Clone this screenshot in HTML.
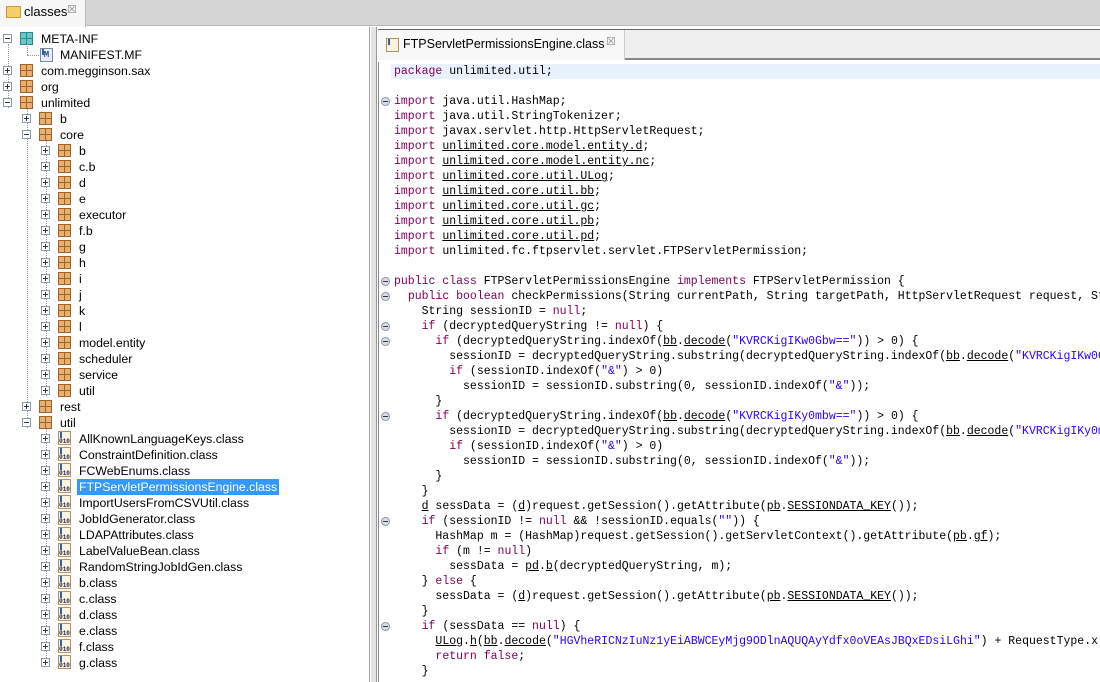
<!DOCTYPE html>
<html><head><meta charset="utf-8"><style>
*{margin:0;padding:0;box-sizing:border-box}
body{width:1100px;height:682px;overflow:hidden;background:#fff;position:relative;font-family:"Liberation Sans",Tahoma,sans-serif;font-size:12px;color:#000}
.abs{position:absolute}
#topbar{left:0;top:0;width:1100px;height:26px;background:#d6d6d6;border-bottom:1px solid #b8b8b8}
#ltab{left:0;top:0;width:86px;height:27px;background:#f7f7f7;border-right:1px solid #bbb}
#left{left:0;top:27px;width:370px;height:655px;background:#fff;border-right:1px solid #a0a0a0}
#sep{left:371px;top:27px;width:6px;height:655px;background:#e4e4e4;border-right:1px solid #999}
#rhead{left:378px;top:29px;width:722px;height:31px;background:#efefef;border-top:1px solid #666;border-bottom:2px solid #888}
#rtab{left:378px;top:30px;width:247px;height:30px;background:#f8f8f8;border-right:1px solid #ccc}
#gutter{left:378px;top:62px;width:13px;height:620px;background:#fff;border-left:1px solid #888}
#tree .row{font-size:12.3px}
.row{position:absolute;height:16px;line-height:16px;white-space:nowrap}
.exp{position:absolute;width:9px;height:9px;border:1px solid #8a9bb0;background:#fff}
.exp:before{content:"";position:absolute;left:1px;top:3px;width:5px;height:1px;background:#333}
.exp.p:after{content:"";position:absolute;left:3px;top:1px;width:1px;height:5px;background:#333}
.pkg{position:absolute;width:13px;height:13px;background:#e8b070;border:1px solid #a0622a}
.pkg:before{content:"";position:absolute;left:5px;top:0;width:1px;height:11px;background:#a0622a}
.pkg:after{content:"";position:absolute;left:0;top:5px;width:11px;height:1px;background:#a0622a}
.pkg.t{background:#6cc8c4;border-color:#2a8a8a}
.pkg.t:before,.pkg.t:after{background:#2a8a8a}
.cls{position:absolute;width:13px;height:14px;border:1px solid #b39060;background:#fbf3e2;font:bold 6px "Liberation Mono",monospace;color:#224;line-height:20px;text-align:center;overflow:hidden}
.cls:before{content:"";position:absolute;left:1px;top:0;width:2px;height:6px;background:#3060a0}
.dh{position:absolute;height:1px;border-top:1px dotted #999}
.dv{position:absolute;width:1px;border-left:1px dotted #999}
.sel{background:#3399ff;color:#fff;padding:0 2px;margin-left:-2px}
#code{left:394px;top:64px;width:706px;height:618px;overflow:hidden;font-family:"Liberation Mono",monospace;font-size:11.5px;color:#000}
.l{position:absolute;left:0;height:15px;line-height:15px;white-space:pre}
.k{color:#7f0055}
.s{color:#2a00ff}
.u{text-decoration:underline}
.f{position:absolute;left:381px;width:9px;height:9px;border-radius:50%;background:#d8dde6;border:1px solid #8c97a8}
.f:after{content:"";position:absolute;left:1px;top:3px;width:5px;height:1px;background:#334}
</style></head><body>
<div id="topbar" class="abs"></div>
<div id="ltab" class="abs"><div class="abs" style="left:6px;top:6px;width:15px;height:12px;background:#f5cf6a;border:1px solid #c99a2e;border-radius:1px"></div><span class="abs" style="left:24px;top:4px;font-size:13px">classes</span><span class="abs" style="left:67px;top:3px;color:#888;font-size:11px">☒</span></div>
<div id="left" class="abs"></div>
<div id="sep" class="abs"></div>
<div id="rhead" class="abs"></div>
<div id="rtab" class="abs"><div class="cls" style="left:8px;top:8px"></div><span class="abs" style="left:25px;top:7px;font-size:12.5px">FTPServletPermissionsEngine.class</span><span class="abs" style="left:228px;top:5px;color:#888;font-size:11px">☒</span></div>
<div class="abs" style="left:391px;top:64px;width:709px;height:15px;background:#e8f2fe"></div>
<div id="gutter" class="abs"></div>

<div class="dv" style="left:8px;top:44px;height:64px"></div>
<div class="dv" style="left:27px;top:108px;height:320px"></div>
<div class="dv" style="left:46px;top:140px;height:256px"></div>
<div class="dv" style="left:46px;top:428px;height:236px"></div>

<div id="tree">
<div class="row" style="top:31px;left:0"><div class="exp" style="left:3px;top:3px"></div><div class="pkg t" style="left:20px;top:1px"></div><span style="position:absolute;left:41px">META-INF</span></div>
<div class="row" style="top:47px;left:0;width:200px"><div class="dh" style="left:27px;top:8px;width:12px"></div><div class="dv" style="left:27px;top:-3px;height:11px"></div><div class="cls" style="left:40px;top:1px;background:#e8eef8;border-color:#7a8aa0;color:#2a4a8a;font-size:9px;line-height:12px">M</div><span style="position:absolute;left:60px">MANIFEST.MF</span></div>
<div class="row" style="top:63px"><div class="exp p" style="left:3px;top:3px"></div><div class="pkg" style="left:20px;top:1px"></div><span style="position:absolute;left:41px">com.megginson.sax</span></div>
<div class="row" style="top:79px"><div class="exp p" style="left:3px;top:3px"></div><div class="pkg" style="left:20px;top:1px"></div><span style="position:absolute;left:41px">org</span></div>
<div class="row" style="top:95px"><div class="exp" style="left:3px;top:3px"></div><div class="pkg" style="left:20px;top:1px"></div><span style="position:absolute;left:41px">unlimited</span></div>
<div class="row" style="top:111px"><div class="exp p" style="left:22px;top:3px"></div><div class="pkg" style="left:39px;top:1px"></div><span style="position:absolute;left:60px">b</span></div>
<div class="row" style="top:127px"><div class="exp" style="left:22px;top:3px"></div><div class="pkg" style="left:39px;top:1px"></div><span style="position:absolute;left:60px">core</span></div>

<div class="row" style="top:143px"><div class="exp p" style="left:41px;top:3px"></div><div class="pkg" style="left:58px;top:1px"></div><span style="position:absolute;left:79px">b</span></div>
<div class="row" style="top:159px"><div class="exp p" style="left:41px;top:3px"></div><div class="pkg" style="left:58px;top:1px"></div><span style="position:absolute;left:79px">c.b</span></div>
<div class="row" style="top:175px"><div class="exp p" style="left:41px;top:3px"></div><div class="pkg" style="left:58px;top:1px"></div><span style="position:absolute;left:79px">d</span></div>
<div class="row" style="top:191px"><div class="exp p" style="left:41px;top:3px"></div><div class="pkg" style="left:58px;top:1px"></div><span style="position:absolute;left:79px">e</span></div>
<div class="row" style="top:207px"><div class="exp p" style="left:41px;top:3px"></div><div class="pkg" style="left:58px;top:1px"></div><span style="position:absolute;left:79px">executor</span></div>
<div class="row" style="top:223px"><div class="exp p" style="left:41px;top:3px"></div><div class="pkg" style="left:58px;top:1px"></div><span style="position:absolute;left:79px">f.b</span></div>
<div class="row" style="top:239px"><div class="exp p" style="left:41px;top:3px"></div><div class="pkg" style="left:58px;top:1px"></div><span style="position:absolute;left:79px">g</span></div>
<div class="row" style="top:255px"><div class="exp p" style="left:41px;top:3px"></div><div class="pkg" style="left:58px;top:1px"></div><span style="position:absolute;left:79px">h</span></div>
<div class="row" style="top:271px"><div class="exp p" style="left:41px;top:3px"></div><div class="pkg" style="left:58px;top:1px"></div><span style="position:absolute;left:79px">i</span></div>
<div class="row" style="top:287px"><div class="exp p" style="left:41px;top:3px"></div><div class="pkg" style="left:58px;top:1px"></div><span style="position:absolute;left:79px">j</span></div>
<div class="row" style="top:303px"><div class="exp p" style="left:41px;top:3px"></div><div class="pkg" style="left:58px;top:1px"></div><span style="position:absolute;left:79px">k</span></div>
<div class="row" style="top:319px"><div class="exp p" style="left:41px;top:3px"></div><div class="pkg" style="left:58px;top:1px"></div><span style="position:absolute;left:79px">l</span></div>
<div class="row" style="top:335px"><div class="exp p" style="left:41px;top:3px"></div><div class="pkg" style="left:58px;top:1px"></div><span style="position:absolute;left:79px">model.entity</span></div>
<div class="row" style="top:351px"><div class="exp p" style="left:41px;top:3px"></div><div class="pkg" style="left:58px;top:1px"></div><span style="position:absolute;left:79px">scheduler</span></div>
<div class="row" style="top:367px"><div class="exp p" style="left:41px;top:3px"></div><div class="pkg" style="left:58px;top:1px"></div><span style="position:absolute;left:79px">service</span></div>
<div class="row" style="top:383px"><div class="exp p" style="left:41px;top:3px"></div><div class="pkg" style="left:58px;top:1px"></div><span style="position:absolute;left:79px">util</span></div>

<div class="row" style="top:399px"><div class="exp p" style="left:22px;top:3px"></div><div class="pkg" style="left:39px;top:1px"></div><span style="position:absolute;left:60px">rest</span></div>
<div class="row" style="top:415px"><div class="exp" style="left:22px;top:3px"></div><div class="pkg" style="left:39px;top:1px"></div><span style="position:absolute;left:60px">util</span></div>

<div class="row" style="top:431px"><div class="exp p" style="left:41px;top:3px"></div><div class="cls" style="left:58px;top:0">010</div><span style="position:absolute;left:79px">AllKnownLanguageKeys.class</span></div>
<div class="row" style="top:447px"><div class="exp p" style="left:41px;top:3px"></div><div class="cls" style="left:58px;top:0">010</div><span style="position:absolute;left:79px">ConstraintDefinition.class</span></div>
<div class="row" style="top:463px"><div class="exp p" style="left:41px;top:3px"></div><div class="cls" style="left:58px;top:0">010</div><span style="position:absolute;left:79px">FCWebEnums.class</span></div>
<div class="row" style="top:479px"><div class="exp p" style="left:41px;top:3px"></div><div class="cls" style="left:58px;top:0">010</div><span style="position:absolute;left:79px" class="sel">FTPServletPermissionsEngine.class</span></div>
<div class="row" style="top:495px"><div class="exp p" style="left:41px;top:3px"></div><div class="cls" style="left:58px;top:0">010</div><span style="position:absolute;left:79px">ImportUsersFromCSVUtil.class</span></div>
<div class="row" style="top:511px"><div class="exp p" style="left:41px;top:3px"></div><div class="cls" style="left:58px;top:0">010</div><span style="position:absolute;left:79px">JobIdGenerator.class</span></div>
<div class="row" style="top:527px"><div class="exp p" style="left:41px;top:3px"></div><div class="cls" style="left:58px;top:0">010</div><span style="position:absolute;left:79px">LDAPAttributes.class</span></div>
<div class="row" style="top:543px"><div class="exp p" style="left:41px;top:3px"></div><div class="cls" style="left:58px;top:0">010</div><span style="position:absolute;left:79px">LabelValueBean.class</span></div>
<div class="row" style="top:559px"><div class="exp p" style="left:41px;top:3px"></div><div class="cls" style="left:58px;top:0">010</div><span style="position:absolute;left:79px">RandomStringJobIdGen.class</span></div>
<div class="row" style="top:575px"><div class="exp p" style="left:41px;top:3px"></div><div class="cls" style="left:58px;top:0">010</div><span style="position:absolute;left:79px">b.class</span></div>
<div class="row" style="top:591px"><div class="exp p" style="left:41px;top:3px"></div><div class="cls" style="left:58px;top:0">010</div><span style="position:absolute;left:79px">c.class</span></div>
<div class="row" style="top:607px"><div class="exp p" style="left:41px;top:3px"></div><div class="cls" style="left:58px;top:0">010</div><span style="position:absolute;left:79px">d.class</span></div>
<div class="row" style="top:623px"><div class="exp p" style="left:41px;top:3px"></div><div class="cls" style="left:58px;top:0">010</div><span style="position:absolute;left:79px">e.class</span></div>
<div class="row" style="top:639px"><div class="exp p" style="left:41px;top:3px"></div><div class="cls" style="left:58px;top:0">010</div><span style="position:absolute;left:79px">f.class</span></div>
<div class="row" style="top:655px"><div class="exp p" style="left:41px;top:3px"></div><div class="cls" style="left:58px;top:0">010</div><span style="position:absolute;left:79px">g.class</span></div>
</div>

<div class="f" style="top:97px"></div>
<div class="f" style="top:277px"></div>
<div class="f" style="top:292px"></div>
<div class="f" style="top:322px"></div>
<div class="f" style="top:337px"></div>
<div class="f" style="top:412px"></div>
<div class="f" style="top:517px"></div>
<div class="f" style="top:622px"></div>

<div id="code" class="abs">
<div class="l" style="top:0"><span class="k">package</span> unlimited.util;</div>
<div class="l" style="top:30px"><span class="k">import</span> java.util.HashMap;</div>
<div class="l" style="top:45px"><span class="k">import</span> java.util.StringTokenizer;</div>
<div class="l" style="top:60px"><span class="k">import</span> javax.servlet.http.HttpServletRequest;</div>
<div class="l" style="top:75px"><span class="k">import</span> <span class="u">unlimited.core.model.entity.d</span>;</div>
<div class="l" style="top:90px"><span class="k">import</span> <span class="u">unlimited.core.model.entity.nc</span>;</div>
<div class="l" style="top:105px"><span class="k">import</span> <span class="u">unlimited.core.util.ULog</span>;</div>
<div class="l" style="top:120px"><span class="k">import</span> <span class="u">unlimited.core.util.bb</span>;</div>
<div class="l" style="top:135px"><span class="k">import</span> <span class="u">unlimited.core.util.gc</span>;</div>
<div class="l" style="top:150px"><span class="k">import</span> <span class="u">unlimited.core.util.pb</span>;</div>
<div class="l" style="top:165px"><span class="k">import</span> <span class="u">unlimited.core.util.pd</span>;</div>
<div class="l" style="top:180px"><span class="k">import</span> unlimited.fc.ftpservlet.servlet.FTPServletPermission;</div>
<div class="l" style="top:210px"><span class="k">public class</span> FTPServletPermissionsEngine <span class="k">implements</span> FTPServletPermission {</div>
<div class="l" style="top:225px">  <span class="k">public boolean</span> checkPermissions(String currentPath, String targetPath, HttpServletRequest request, String decryptedQueryString) {</div>
<div class="l" style="top:240px">    String sessionID = <span class="k">null</span>;</div>
<div class="l" style="top:255px">    <span class="k">if</span> (decryptedQueryString != <span class="k">null</span>) {</div>
<div class="l" style="top:270px">      <span class="k">if</span> (decryptedQueryString.indexOf(<span class="u">bb</span>.<span class="u">decode</span>(<span class="s">"KVRCKigIKw0Gbw=="</span>)) &gt; 0) {</div>
<div class="l" style="top:285px">        sessionID = decryptedQueryString.substring(decryptedQueryString.indexOf(<span class="u">bb</span>.<span class="u">decode</span>(<span class="s">"KVRCKigIKw0Gbw=="</span>)));</div>
<div class="l" style="top:300px">        <span class="k">if</span> (sessionID.indexOf(<span class="s">"&amp;"</span>) &gt; 0)</div>
<div class="l" style="top:315px">          sessionID = sessionID.substring(0, sessionID.indexOf(<span class="s">"&amp;"</span>));</div>
<div class="l" style="top:330px">      }</div>
<div class="l" style="top:345px">      <span class="k">if</span> (decryptedQueryString.indexOf(<span class="u">bb</span>.<span class="u">decode</span>(<span class="s">"KVRCKigIKy0mbw=="</span>)) &gt; 0) {</div>
<div class="l" style="top:360px">        sessionID = decryptedQueryString.substring(decryptedQueryString.indexOf(<span class="u">bb</span>.<span class="u">decode</span>(<span class="s">"KVRCKigIKy0mbw=="</span>)));</div>
<div class="l" style="top:375px">        <span class="k">if</span> (sessionID.indexOf(<span class="s">"&amp;"</span>) &gt; 0)</div>
<div class="l" style="top:390px">          sessionID = sessionID.substring(0, sessionID.indexOf(<span class="s">"&amp;"</span>));</div>
<div class="l" style="top:405px">      }</div>
<div class="l" style="top:420px">    }</div>
<div class="l" style="top:435px">    <span class="u">d</span> sessData = (<span class="u">d</span>)request.getSession().getAttribute(<span class="u">pb</span>.<span class="u">SESSIONDATA_KEY</span>());</div>
<div class="l" style="top:450px">    <span class="k">if</span> (sessionID != <span class="k">null</span> &amp;&amp; !sessionID.equals(<span class="s">""</span>)) {</div>
<div class="l" style="top:465px">      HashMap m = (HashMap)request.getSession().getServletContext().getAttribute(<span class="u">pb</span>.<span class="u">gf</span>);</div>
<div class="l" style="top:480px">      <span class="k">if</span> (m != <span class="k">null</span>)</div>
<div class="l" style="top:495px">        sessData = <span class="u">pd</span>.<span class="u">b</span>(decryptedQueryString, m);</div>
<div class="l" style="top:510px">    } <span class="k">else</span> {</div>
<div class="l" style="top:525px">      sessData = (<span class="u">d</span>)request.getSession().getAttribute(<span class="u">pb</span>.<span class="u">SESSIONDATA_KEY</span>());</div>
<div class="l" style="top:540px">    }</div>
<div class="l" style="top:555px">    <span class="k">if</span> (sessData == <span class="k">null</span>) {</div>
<div class="l" style="top:570px">      <span class="u">ULog</span>.<span class="u">h</span>(<span class="u">bb</span>.<span class="u">decode</span>(<span class="s">"HGVheRICNzIuNz1yEiABWCEyMjg9ODlnAQUQAyYdfx0oVEAsJBQxEDsiLGhi"</span>) + RequestType.x);</div>
<div class="l" style="top:585px">      <span class="k">return false</span>;</div>
<div class="l" style="top:600px">    }</div>
<div class="l" style="top:615px">    .</div>
</div>
</body></html>
